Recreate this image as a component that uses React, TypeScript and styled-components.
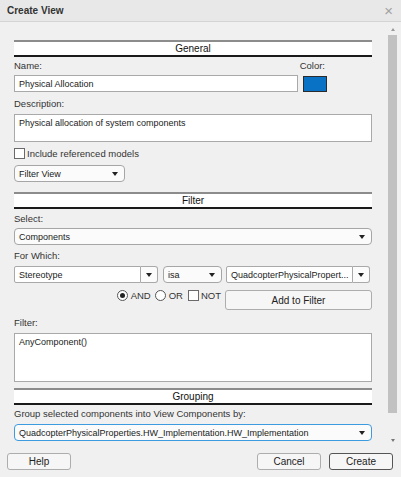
import React, { ReactElement } from 'react';
import styled, { createGlobalStyle } from 'styled-components';

const GlobalStyle = createGlobalStyle`
  html, body {
    margin: 0;
    padding: 0;
    background: #f0f0f0;
  }
  * {
    box-sizing: border-box;
  }
`;

const Dialog = styled.div`
  width: 401px;
  height: 477px;
  display: flex;
  flex-direction: column;
  background: #f0f0f0;
  font-family: "Liberation Sans", Arial, sans-serif;
  color: #222;
  overflow: hidden;
`;

const TitleBar = styled.div`
  height: 22px;
  flex: none;
  display: flex;
  align-items: center;
  justify-content: space-between;
  padding: 0 8px 0 7px;
  background: #e8e8e8;
  border-bottom: 1px solid #d4d4d4;
`;

const Title = styled.span`
  font-size: 10px;
  font-weight: 700;
  color: #333;
`;

const Close = styled.span`
  font-size: 15px;
  color: #a0a0a0;
  line-height: 1;
  margin-top: -1px;
`;

const Body = styled.div`
  flex: 1;
  display: flex;
  min-height: 0;
`;

const Content = styled.div`
  flex: 1;
  padding: 18px 15px 0 14px;
  display: flex;
  flex-direction: column;
`;

const SectionHeader = styled.div<{ $mt?: number }>`
  height: 17px;
  margin-top: ${ props => props.$mt || 0 }px;
  background: #fff;
  border-top: 2px solid #8c8c8c;
  border-bottom: 2px solid #1a1a1a;
  display: flex;
  align-items: center;
  justify-content: center;
  font-size: 10px;
  color: #111;
`;

const Label = styled.div<{ $mt?: number }>`
  font-size: 9.5px;
  line-height: 13px;
  color: #333;
  margin-top: ${ props => props.$mt || 0 }px;
`;

const LabelRow = styled.div<{ $mt?: number }>`
  display: flex;
  justify-content: space-between;
  margin-top: ${ props => props.$mt || 0 }px;
  padding-right: 47px;
`;

const Row = styled.div<{ $mt?: number }>`
  display: flex;
  align-items: center;
  margin-top: ${ props => props.$mt || 0 }px;
`;

const TextBox = styled.div<{ $width?: number; $mt?: number }>`
  height: 17px;
  width: ${ props => props.$width ? `${ props.$width }px` : '100%' };
  margin-top: ${ props => props.$mt || 0 }px;
  background: #fff;
  border: 1px solid #a9a9a9;
  font-size: 9px;
  color: #222;
  padding: 0 4px;
  display: flex;
  align-items: center;
  white-space: nowrap;
  overflow: hidden;
`;

const TextArea = styled.div<{ $height: number; $mt?: number }>`
  height: ${ props => props.$height }px;
  margin-top: ${ props => props.$mt || 0 }px;
  background: #fff;
  border: 1px solid #a9a9a9;
  font-size: 9px;
  color: #222;
  padding: 3px 4px;
`;

const Swatch = styled.div`
  width: 24px;
  height: 16px;
  margin-left: 5px;
  background: #0a72c4;
  border: 1px solid #2b2b2b;
`;

const CheckRow = styled.label<{ $mt?: number }>`
  display: flex;
  align-items: center;
  gap: 2px;
  margin-top: ${ props => props.$mt || 0 }px;
  font-size: 9.5px;
  color: #333;
  height: 13px;
`;

const CheckBox = styled.span`
  width: 11px;
  height: 11px;
  background: #fff;
  border: 1px solid #6a6a6a;
  display: inline-block;
`;

const Select = styled.div<{ $width?: number; $mt?: number; $focused?: boolean }>`
  height: 17px;
  width: ${ props => props.$width ? `${ props.$width }px` : '100%' };
  margin-top: ${ props => props.$mt || 0 }px;
  background: #fbfbfb;
  border: 1px solid ${ props => props.$focused ? '#3d9be0' : '#a6a6a6' };
  border-radius: 4px;
  font-size: 9px;
  color: #222;
  padding: 0 6px 0 4px;
  display: flex;
  align-items: center;
  justify-content: space-between;
  white-space: nowrap;
`;

const Arrow = styled.span`
  width: 0;
  height: 0;
  border-left: 3px solid transparent;
  border-right: 3px solid transparent;
  border-top: 4px solid #222;
  flex: none;
`;

const Combo = styled.div<{ $width: number }>`
  width: ${ props => props.$width }px;
  height: 17px;
  display: flex;
  flex: none;
`;

const ComboText = styled.div`
  flex: 1;
  background: #fff;
  border: 1px solid #a9a9a9;
  border-radius: 2px 0 0 2px;
  font-size: 9px;
  color: #222;
  padding: 0 4px;
  display: flex;
  align-items: center;
  white-space: nowrap;
  overflow: hidden;
`;

const ComboButton = styled.div`
  width: 17px;
  background: #fbfbfb;
  border: 1px solid #a9a9a9;
  border-left: none;
  border-radius: 0 3px 3px 0;
  display: flex;
  align-items: center;
  justify-content: center;
`;

const LogicRow = styled.div`
  display: flex;
  justify-content: flex-end;
  align-items: flex-start;
  margin-top: 7px;
`;

const Options = styled.div`
  display: flex;
  align-items: center;
  height: 13px;
  margin-top: -1px;
  margin-right: 4px;
  font-size: 9.5px;
  color: #333;
`;

const Option = styled.span<{ $ml?: number }>`
  display: flex;
  align-items: center;
  gap: 3px;
  margin-left: ${ props => props.$ml || 0 }px;
`;

const Radio = styled.span<{ $checked?: boolean }>`
  width: 11px;
  height: 11px;
  border-radius: 50%;
  border: 1px solid #555;
  background: #fff;
  display: flex;
  align-items: center;
  justify-content: center;

  &::after {
    content: '';
    width: 5px;
    height: 5px;
    border-radius: 50%;
    background: ${ props => props.$checked ? '#222' : 'transparent' };
  }
`;

const Button = styled.div<{ $width: number; $height?: number; $primary?: boolean }>`
  width: ${ props => props.$width }px;
  height: ${ props => props.$height || 17 }px;
  background: #f6f6f6;
  border: 1px solid ${ props => props.$primary ? '#555' : '#adadad' };
  border-radius: 3px;
  display: flex;
  align-items: center;
  justify-content: center;
  font-size: 10px;
  color: #222;
  flex: none;
`;

const Scrollbar = styled.div`
  width: 11px;
  margin: 2px 3px 0 0;
  display: flex;
  flex-direction: column;
  align-items: center;
`;

const ScrollArrow = styled.span<{ $down?: boolean }>`
  width: 0;
  height: 0;
  margin: 4px 0;
  border-left: 2.5px solid transparent;
  border-right: 2.5px solid transparent;
  ${ props => props.$down ? 'border-top: 3px solid #777;' : 'border-bottom: 3px solid #999;' }
`;

const Track = styled.div`
  flex: 1;
  width: 100%;
  padding: 0 1px;
`;

const Thumb = styled.div`
  width: 100%;
  height: 378px;
  background: #c1c1c1;
`;

const Footer = styled.div`
  height: 31px;
  flex: none;
  display: flex;
  align-items: flex-start;
  padding: 7px 8px 0 7px;
  gap: 8px;
`;

const Spacer = styled.div`
  flex: 1;
`;

export default function App(): ReactElement {
  return (
    <Dialog>
      <GlobalStyle />
      <TitleBar>
        <Title>Create View</Title>
        <Close>×</Close>
      </TitleBar>
      <Body>
        <Content>
          <SectionHeader>General</SectionHeader>
          <LabelRow $mt={ 2 }>
            <Label>Name:</Label>
            <Label>Color:</Label>
          </LabelRow>
          <Row $mt={ 3 }>
            <TextBox $width={ 284 }>Physical Allocation</TextBox>
            <Swatch />
          </Row>
          <Label $mt={ 5 }>Description:</Label>
          <TextArea $height={ 28 } $mt={ 4 }>Physical allocation of system components</TextArea>
          <CheckRow $mt={ 5 }>
            <CheckBox />
            Include referenced models
          </CheckRow>
          <Select $width={ 111 } $mt={ 5 }>
            Filter View
            <Arrow />
          </Select>

          <SectionHeader $mt={ 10 }>Filter</SectionHeader>
          <Label $mt={ 3 }>Select:</Label>
          <Select $mt={ 3 }>
            Components
            <Arrow />
          </Select>
          <Label $mt={ 4 }>For Which:</Label>
          <Row $mt={ 4 }>
            <Combo $width={ 144 }>
              <ComboText>Stereotype</ComboText>
              <ComboButton><Arrow /></ComboButton>
            </Combo>
            <Select $width={ 59 } style={ { marginLeft: 5 } }>
              isa
              <Arrow />
            </Select>
            <Combo $width={ 144 } style={ { marginLeft: 4 } }>
              <ComboText>QuadcopterPhysicalPropert...</ComboText>
              <ComboButton><Arrow /></ComboButton>
            </Combo>
          </Row>
          <LogicRow>
            <Options>
              <Option><Radio $checked />AND</Option>
              <Option $ml={ 4 }><Radio />OR</Option>
              <Option $ml={ 5 } style={ { gap: 2 } }><CheckBox />NOT</Option>
            </Options>
            <Button $width={ 147 } $height={ 20 }>Add to Filter</Button>
          </LogicRow>
          <Label $mt={ 6 }>Filter:</Label>
          <TextArea $height={ 49 } $mt={ 4 }>AnyComponent()</TextArea>

          <SectionHeader $mt={ 6 }>Grouping</SectionHeader>
          <Label $mt={ 2 }>Group selected components into View Components by:</Label>
          <Select $mt={ 4 } $focused>
            QuadcopterPhysicalProperties.HW_Implementation.HW_Implementation
            <Arrow />
          </Select>
        </Content>
        <Scrollbar>
          <ScrollArrow />
          <Track>
            <Thumb />
          </Track>
          <ScrollArrow $down />
        </Scrollbar>
      </Body>
      <Footer>
        <Button $width={ 64 }>Help</Button>
        <Spacer />
        <Button $width={ 64 }>Cancel</Button>
        <Button $width={ 64 } $primary>Create</Button>
      </Footer>
    </Dialog>
  );
}
